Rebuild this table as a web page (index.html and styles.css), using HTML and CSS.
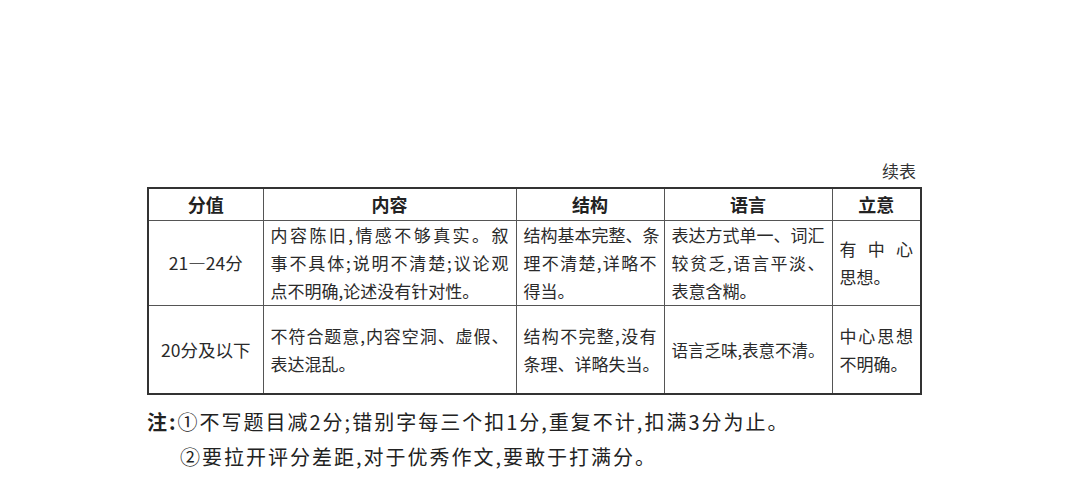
FILE: index.html
```
<!DOCTYPE html>
<html lang="zh-CN">
<head>
<meta charset="utf-8">
<link rel="stylesheet" href="styles.css">
</head>
<body>
<div class="page">
  <div class="caption">续表</div>
  <table class="grid">
    <colgroup>
      <col class="c1"><col class="c2"><col class="c3"><col class="c4"><col class="c5">
    </colgroup>
    <tr class="head">
      <th>分值</th><th>内容</th><th>结构</th><th>语言</th><th>立意</th>
    </tr>
    <tr class="r1">
      <td class="score">21—24分</td>
      <td><span class="j">内容陈旧,情感不够真实。叙</span><span class="j">事不具体;说明不清楚;议论观</span><span class="l">点不明确,论述没有针对性。</span></td>
      <td><span class="j">结构基本完整、条</span><span class="j">理不清楚,详略不</span><span class="l">得当。</span></td>
      <td><span class="j">表达方式单一、词汇</span><span class="j">较贫乏,语言平淡、</span><span class="l">表意含糊。</span></td>
      <td><span class="j">有中心</span><span class="l">思想。</span></td>
    </tr>
    <tr class="r2">
      <td class="score">20分及以下</td>
      <td><span class="j">不符合题意,内容空洞、虚假、</span><span class="l">表达混乱。</span></td>
      <td><span class="j">结构不完整,没有</span><span class="l">条理、详略失当。</span></td>
      <td><span class="l small">语言乏味,表意不清。</span></td>
      <td><span class="j">中心思想</span><span class="l">不明确。</span></td>
    </tr>
  </table>
  <div class="notes">
    <p class="n1"><b>注:</b>①不写题目减2分;错别字每三个扣1分,重复不计,扣满3分为止。</p>
    <p class="n2">②要拉开评分差距,对于优秀作文,要敢于打满分。</p>
  </div>
</div>
</body>
</html>
```
FILE: styles.css
```
html, body {
  margin: 0;
  padding: 0;
  background: #fff;
}
body {
  width: 1080px;
  height: 488px;
  overflow: hidden;
  font-family: "Noto Sans CJK SC", "Noto Sans", sans-serif;
  color: #222;
}
.page {
  padding-top: 160px;
  padding-left: 147px;
  width: 773px;
}
.caption {
  text-align: right;
  font-size: 17px;
  line-height: 22px;
  height: 27px;
  padding-right: 4px;
  color: #333;
}
.grid {
  border-collapse: collapse;
  width: 773px;
  table-layout: fixed;
  border: 2px solid #333;
}
.c1 { width: 115px; }
.c2 { width: 253px; }
.c3 { width: 148px; }
.c4 { width: 168px; }
.c5 { width: 89px; }
.grid th, .grid td {
  border: 1px solid #555;
  padding: 0 7px;
  vertical-align: middle;
}
.grid th {
  font-size: 18px;
  font-weight: 700;
  height: 31px;
  line-height: 31px;
  text-align: center;
  color: #222;
}
.grid td {
  font-size: 17px;
  line-height: 28px;
  color: #2a2a2a;
}
.r1 td { height: 84px; }
.r2 td { height: 87px; }
.grid td.score {
  text-align: center;
  padding: 0 4px;
  font-size: 17.5px;
}
.j {
  display: block;
  text-align: justify;
  text-align-last: justify;
  white-space: nowrap;
}
.l {
  display: block;
  text-align: left;
  white-space: nowrap;
}
.small {
  font-size: 16.5px;
}
.notes {
  padding-top: 9px;
  font-size: 20px;
  letter-spacing: 2px;
  color: #222;
}
.notes p {
  margin: 0;
  line-height: 35px;
  white-space: nowrap;
}
.n2 {
  padding-left: 33px;
}
.notes b {
  font-weight: 700;
}
```
